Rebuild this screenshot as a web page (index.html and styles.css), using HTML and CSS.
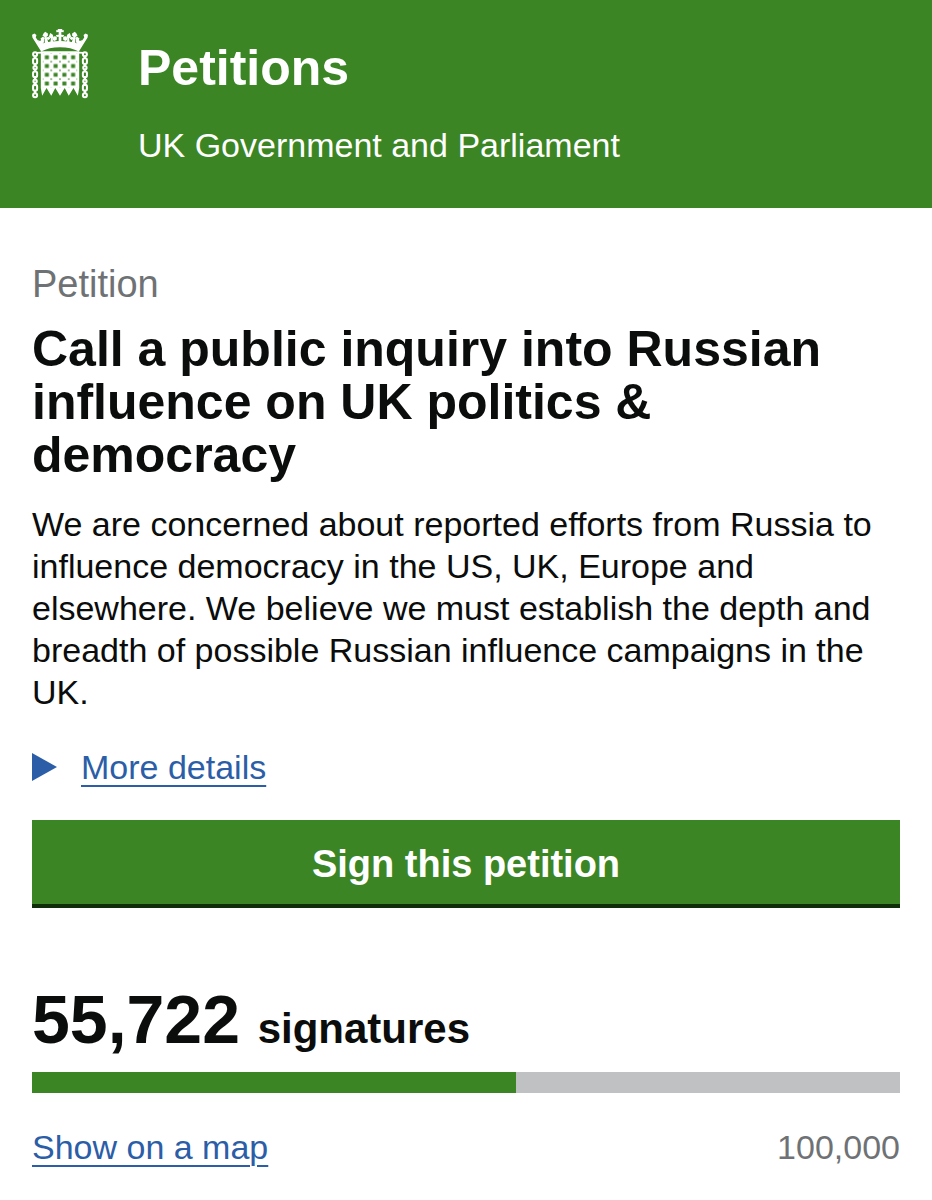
FILE: index.html
```html
<!DOCTYPE html>
<html lang="en">
<head>
<meta charset="UTF-8">
<meta name="viewport" content="width=device-width, initial-scale=1.0">

<title>Petitions - UK Government and Parliament</title>
<link rel="stylesheet" href="styles.css">
</head>
<body>
    <header class="header">
        <svg class="logo" viewBox="0 0 166 208" role="img" aria-label="Parliament portcullis">
            <defs>
                <pattern id="grid" x="31" y="71" width="26" height="26" patternUnits="userSpaceOnUse">
                    <rect x="7" y="7" width="12" height="12" rx="1" fill="#3b8524"/>
                    <path d="M0 0h3l-3 3zM26 0v3l-3-3zM0 26v-3l3 3zM26 26h-3l3-3z" fill="#3b8524"/>
                </pattern>
                <g id="chain" fill="none" stroke="#fff" stroke-width="6">
                    <circle cx="9" cy="75" r="6"/>
                    <rect x="3" y="87" width="12" height="17" rx="5"/>
                    <circle cx="9" cy="115" r="5"/>
                    <rect x="3" y="126" width="12" height="17" rx="5"/>
                    <circle cx="9" cy="155" r="5"/>
                    <rect x="3" y="166" width="12" height="17" rx="5"/>
                    <circle cx="9" cy="197" r="6"/>
                    <path stroke-width="7" d="M9 81v6M9 104v6M9 120v6M9 143v7M9 160v6M9 183v8"/>
                </g>
                <g id="crown-half" fill="#fff">
                    <path d="M27 67L1 25l-1-8 7-4 6 5-2 7 14 20Q50 36 83 36v18Q50 54 27 67z"/>
                    <!-- fleur between the rim and the tall cross -->
                    <path d="M16 33l8 3 6-6 6 4-2 9-10 5z"/>
                    <path d="M38 44l-1-20-6-4 3-7 5-5 8 5v7l-4 3 6 19z"/>
                    <path d="M25 28l7-5 6 4-4 7-7-1zM43 25l8-3 3 6-5 5-6-3z"/>
                    <path d="M54 42l2-14-6-6 4-10 7 4 3 8-3 5 2 12z"/>
                    <path d="M61 26l7-5 6 4-1 8-7 3-5-4z"/>
                    <path d="M79 40V23l-6 1-2-6 8-1V9l-7 1V3l5 1-1-4h7v40z"/>
                </g>
            </defs>
            <use href="#crown-half"/>
            <use href="#crown-half" transform="matrix(-1 0 0 1 166 0)"/>
            <!-- portcullis -->
            <path fill="#fff" d="M26 66h114v109l-4 23-13-23-14 23-12-23-14 23-14-23-12 23-14-23-13 23-4-23z"/>
            <rect x="32" y="73" width="102" height="100" fill="url(#grid)"/>
            <path stroke="#fff" stroke-width="5" d="M14 71l14-1M138 70l14 1"/>
            <use href="#chain"/>
            <use href="#chain" x="148"/>
        </svg>
        <div class="header-text">
            <a class="site-name" href="#">Petitions</a>
            <p class="tagline">UK Government and Parliament</p>
        </div>
    </header>

    <main class="container">
        <h1>
            <span class="context">Petition</span>
            Call a public inquiry into Russian influence on UK politics &amp; democracy
        </h1>
        <p class="intro">We are concerned about reported efforts from Russia to influence democracy in the US, UK, Europe and elsewhere. We believe we must establish the depth and breadth of possible Russian influence campaigns in the UK.</p>

        <details>
            <summary><span>More details</span></summary>
        </details>

        <button type="button">Sign this petition</button>

        <p class="signature-count"><span class="count">55,722</span> signatures</p>
        <div class="graph" role="progressbar" aria-label="Signatures" aria-valuenow="55722" aria-valuemin="0" aria-valuemax="100000">
            <div class="graph-bar" style="width: 55.722%"></div>
        </div>
        <div class="graph-info">
            <a href="#">Show on a map</a>
            <span class="goal">100,000</span>
        </div>
    </main>
</body>
</html>
```
FILE: styles.css
```css
body {
    font-family: "Liberation Sans", Arial, sans-serif;
    font-size: 34px;
    line-height: 42px;
    color: #0b0c0c;
    background-color: #fff;
    margin: 0;
}

p {
    margin: 0;
}

a {
    color: #2b5ea7;
    text-decoration-thickness: 2px;
    text-underline-offset: 6px;
}

.header {
    display: flex;
    align-items: flex-start;
    gap: 50px;
    padding: 29px 32px 42px;
    background-color: #3b8524;
    color: #fff;
}

.logo {
    width: 56px;
    height: 70px;
    flex-shrink: 0;
}

.site-name {
    display: block;
    margin: 9px 0 26px;
    font-size: 50px;
    line-height: 60px;
    font-weight: bold;
    color: #fff;
    text-decoration: none;
}

.container {
    padding: 55px 32px 28px;
}

h1 {
    margin: 0 0 21px;
    font-size: 50px;
    line-height: 53px;
}

.context {
    display: block;
    margin-bottom: 18px;
    font-size: 38px;
    line-height: 42px;
    font-weight: normal;
    color: #6f7275;
}

details {
    margin: 33px 0 32px;
    color: #2b5ea7;
}

summary {
    display: flex;
    align-items: center;
    gap: 24px;
    cursor: pointer;
}

summary::before {
    content: "";
    border-left: 25px solid #2b5ea7;
    border-top: 14px solid transparent;
    border-bottom: 14px solid transparent;
}

details[open] summary::before {
    transform: rotate(90deg);
}

summary span {
    text-decoration: underline;
    text-decoration-thickness: 2px;
    text-underline-offset: 6px;
}

button {
    display: block;
    width: 100%;
    padding: 23px 24px;
    font-family: inherit;
    font-size: 38px;
    line-height: 42px;
    font-weight: bold;
    color: #fff;
    background-color: #3b8524;
    border: none;
    box-shadow: inset 0 -4px #0f2d08;
    cursor: pointer;
}

button:hover {
    background-color: #326f1e;
}

.signature-count {
    margin: 75px 0 7px;
    font-size: 42px;
    line-height: 72px;
    font-weight: bold;
}

.count {
    margin-right: 6px;
    font-size: 68px;
}

.graph {
    height: 21px;
    background-color: #bfc1c3;
}

.graph-bar {
    height: 100%;
    background-color: #3b8524;
}

.graph-info {
    display: flex;
    justify-content: space-between;
    margin-top: 33px;
}

.goal {
    color: #6f7275;
}
```
